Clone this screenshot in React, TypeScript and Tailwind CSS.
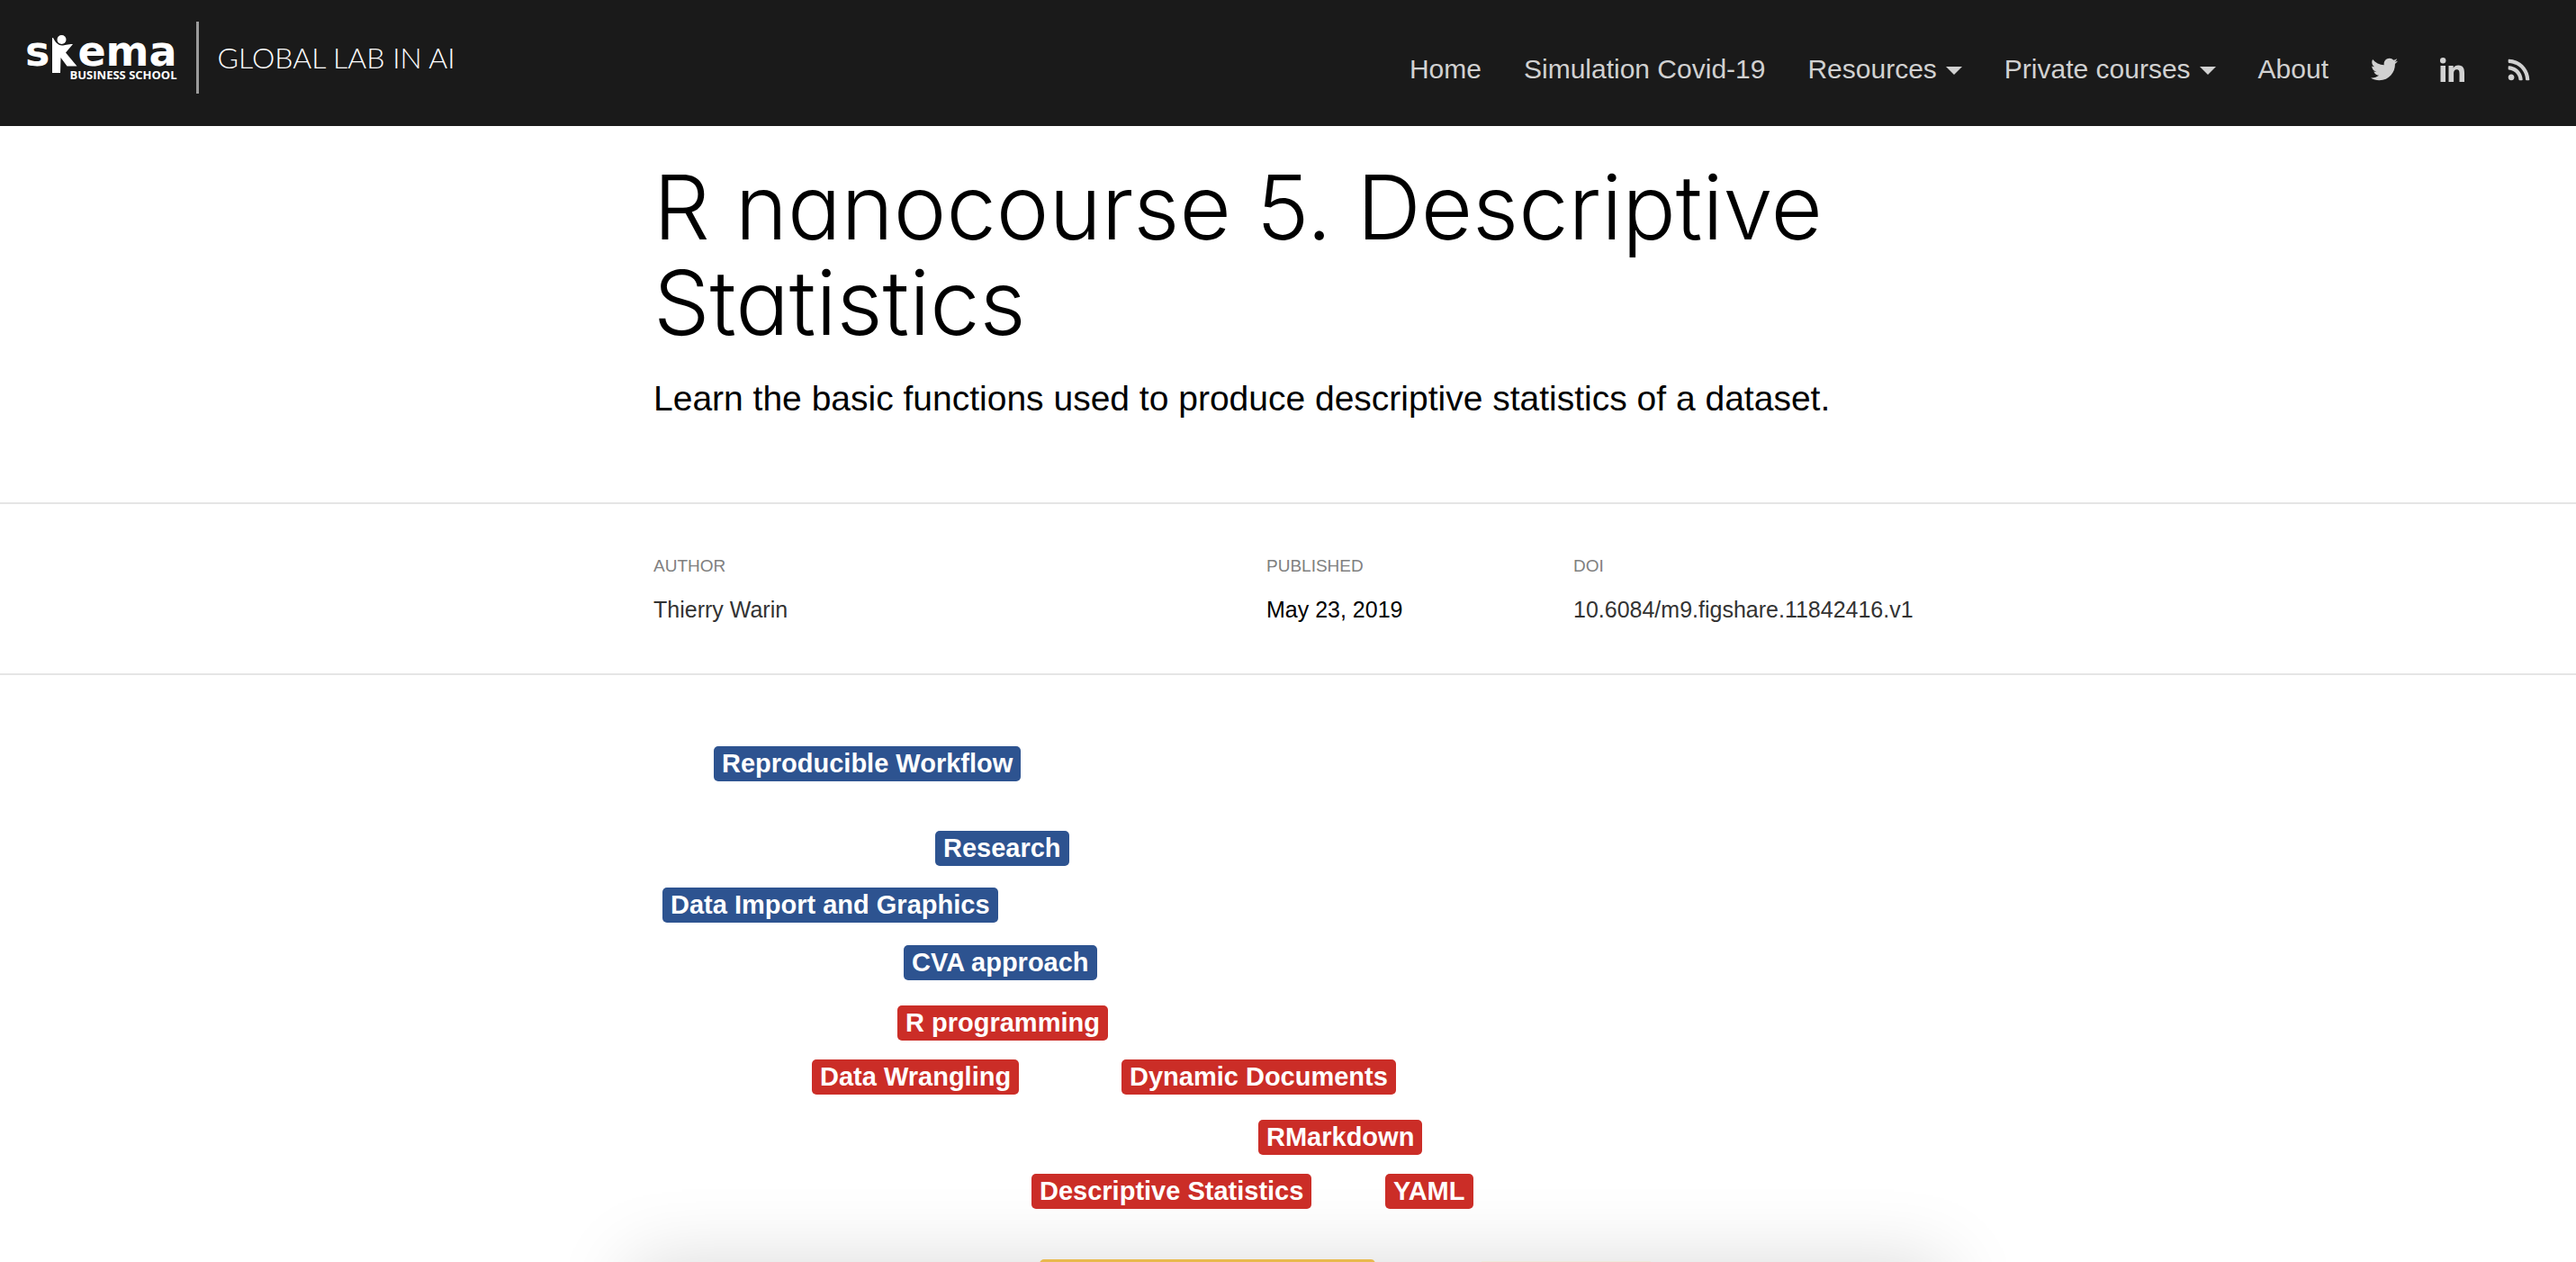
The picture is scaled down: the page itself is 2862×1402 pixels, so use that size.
import { FaRss, FaTwitter } from "react-icons/fa";

function Logo() {
  return (
    <a href="#home" className="flex items-start" aria-label="Skema Business School, Global Lab in AI">
      <span className="flex flex-col pt-[13px] text-white">
        <span className="flex h-[38px] items-start font-['DejaVu_Sans'] text-[46px] leading-10 font-bold">
          <span>s</span>
          <svg viewBox="0 0 31 42" className="mt-0.5 h-[42px] w-[31px]" fill="currentColor" aria-hidden="true">
            <circle cx="13.5" cy="5" r="5" />
            <path d="M3 3 H4 C6 7 9 11.500 14 11.500 C17 11.500 20 10 26 10 L18 19.500 L30.500 34.500 L19.500 34.500 L12.500 25 L12 42 L3 42 Z" />
          </svg>
          <span>ema</span>
        </span>
        <span className="self-end font-['Open_Sans'] text-[13px] leading-4 font-bold">BUSINESS SCHOOL</span>
      </span>
      <span className="ml-[21px] h-20 w-[3px] bg-[#9b9b9b]" />
      <span className="ml-[21px] font-['Lato'] text-[32px] leading-20 font-light text-white">GLOBAL LAB IN AI</span>
    </a>
  );
}

function Caret() {
  return (
    <svg viewBox="0 0 18 9" className="mt-0.5 h-[9px] w-[18px]" fill="currentColor" aria-hidden="true">
      <path d="M0 0H18L9 9Z" />
    </svg>
  );
}

const links = [
  { label: "Home" },
  { label: "Simulation Covid-19" },
  { label: "Resources", menu: true },
  { label: "Private courses", menu: true },
  { label: "About" },
];

const tags = [
  { label: "Reproducible Workflow", place: "left-[67px] top-[79px]", color: "bg-[#2d5390]" },
  { label: "Research", place: "left-[313px] top-[173px]", color: "bg-[#2d5390]" },
  { label: "Data Import and Graphics", place: "left-[10px] top-[236px]", color: "bg-[#2d5390]" },
  { label: "CVA approach", place: "left-[278px] top-[300px]", color: "bg-[#2d5390]" },
  { label: "R programming", place: "left-[271px] top-[367px]", color: "bg-[#cb2d27]" },
  { label: "Data Wrangling", place: "left-[176px] top-[427px]", color: "bg-[#cb2d27]" },
  { label: "Dynamic Documents", place: "left-[520px] top-[427px]", color: "bg-[#cb2d27]" },
  { label: "RMarkdown", place: "left-[672px] top-[494px]", color: "bg-[#cb2d27]" },
  { label: "Descriptive Statistics", place: "left-[420px] top-[554px]", color: "bg-[#cb2d27]" },
  { label: "YAML", place: "left-[813px] top-[554px]", color: "bg-[#cb2d27]" },
];

export default function App() {
  return (
    <div className="flex min-h-screen flex-col bg-white font-['Liberation_Sans',sans-serif] text-black">
      <header className="flex h-[140px] items-start justify-between bg-[#1a1a1a] pt-6 pr-[50px] pl-7">
        <Logo />
        <nav className="mt-[33px] flex items-center gap-[47px] text-[30px] leading-10 text-[#d1d1d1]">
          {links.map((l) =>
            l.menu ? (
              <button key={l.label} type="button" className="flex items-center gap-2.5">
                {l.label}
                <Caret />
              </button>
            ) : (
              <a key={l.label} href="#top">
                {l.label}
              </a>
            ),
          )}
          <a href="#twitter" aria-label="Twitter">
            <FaTwitter className="h-[30px] w-[30px]" />
          </a>
          <a href="#linkedin" aria-label="LinkedIn">
            <svg viewBox="0 0 27 27" className="h-[27px] w-[27px]" fill="currentColor" aria-hidden="true">
              <circle cx="3.2" cy="3.2" r="3.2" />
              <path d="M.5 9H6V27H.5ZM9.500 9H14.700V11.500C15.800 9.700 17.700 8.500 20.300 8.500C25.500 8.500 27 12 27 17V27H21.500V18C21.500 15.500 21.300 13.200 18.500 13.200C15.700 13.200 15.100 15.500 15.100 18V27H9.500Z" />
            </svg>
          </a>
          <a href="#rss" aria-label="RSS">
            <FaRss className="h-[27px] w-[27px]" />
          </a>
        </nav>
      </header>

      <section className="border-b-2 border-[#e5e5e5]">
        <div className="mx-auto max-w-[1410px] pt-[37px] pb-[86px]">
          <h1 className="font-['Inter'] text-[99px] leading-[106px] font-light [font-feature-settings:'cv11']">
            R nanocourse 5. Descriptive Statistics
          </h1>
          <p className="mt-[25px] text-[39px] leading-[58px]">
            Learn the basic functions used to produce descriptive statistics of a dataset.
          </p>
        </div>
      </section>

      <section className="border-b-2 border-[#e5e5e5]">
        <div className="mx-auto grid max-w-[1410px] grid-cols-[681px_341px_1fr] pt-[55px] pb-[51px] text-[25px] leading-10 text-[#333]">
          <div>
            <h2 className="mb-3.5 text-[19px] leading-7 text-[#808080]">AUTHOR</h2>
            <a href="#author">Thierry Warin</a>
          </div>
          <div>
            <h2 className="mb-3.5 text-[19px] leading-7 text-[#808080]">PUBLISHED</h2>
            <p className="text-black">May 23, 2019</p>
          </div>
          <div>
            <h2 className="mb-3.5 text-[19px] leading-7 text-[#808080]">DOI</h2>
            <a href="#doi">10.6084/m9.figshare.11842416.v1</a>
          </div>
        </div>
      </section>

      <main className="relative flex flex-1 overflow-hidden">
        <div className="relative mx-auto w-full max-w-[1410px]">
          <div className="absolute -inset-x-6 top-[652px] h-96 shadow-[0_0_80px_rgba(0,0,0,0.15)]" />
          {tags.map((t) => (
            <a
              key={t.label}
              href="#node"
              className={`absolute rounded-[5px] px-[9px] text-[29px] leading-[39px] font-bold whitespace-nowrap text-white ${t.place} ${t.color}`}
            >
              {t.label}
            </a>
          ))}
          <div className="absolute top-[649px] left-[429px] h-10 w-[373px] rounded-[5px] bg-[#e8b94d]" />
          <div className="absolute top-[651px] left-[920px] h-10 w-[188px] bg-[#eeeadb]" />
        </div>
      </main>
    </div>
  );
}
